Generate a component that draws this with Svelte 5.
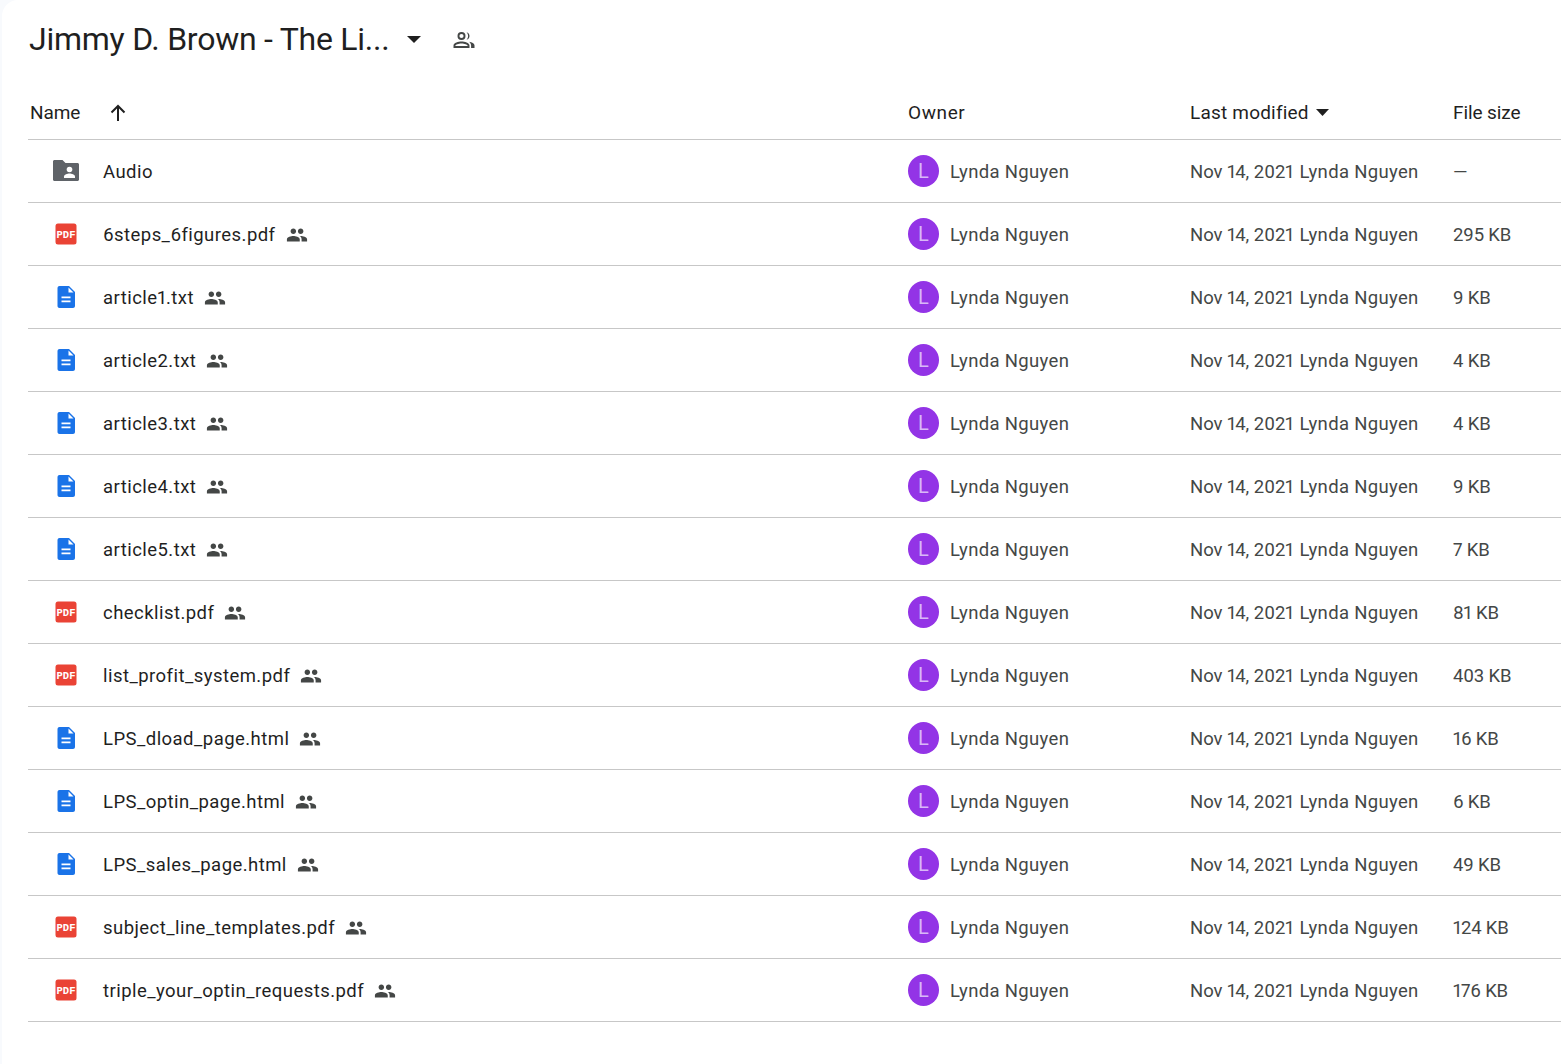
<script>
  const files = [
    { name: 'Audio', type: 'folder', size: '—' },
    { name: '6steps_6figures.pdf', type: 'pdf', size: '295 KB', shared: true },
    { name: 'article1.txt', type: 'doc', size: '9 KB', shared: true },
    { name: 'article2.txt', type: 'doc', size: '4 KB', shared: true },
    { name: 'article3.txt', type: 'doc', size: '4 KB', shared: true },
    { name: 'article4.txt', type: 'doc', size: '9 KB', shared: true },
    { name: 'article5.txt', type: 'doc', size: '7 KB', shared: true },
    { name: 'checklist.pdf', type: 'pdf', size: '81 KB', shared: true },
    { name: 'list_profit_system.pdf', type: 'pdf', size: '403 KB', shared: true },
    { name: 'LPS_dload_page.html', type: 'doc', size: '16 KB', shared: true },
    { name: 'LPS_optin_page.html', type: 'doc', size: '6 KB', shared: true },
    { name: 'LPS_sales_page.html', type: 'doc', size: '49 KB', shared: true },
    { name: 'subject_line_templates.pdf', type: 'pdf', size: '124 KB', shared: true },
    { name: 'triple_your_optin_requests.pdf', type: 'pdf', size: '176 KB', shared: true }
  ]
</script>

<style>
  :global(body) {
    background: #f8fafd;
    font-family: Roboto, "Liberation Sans", sans-serif;
  }
  .page {
    margin-left: 2px;
    height: 1064px;
    background: #fff;
    border-radius: 16px 0 0 0;
    padding-left: 26px;
    overflow: hidden;
  }
  .title-bar {
    height: 78px;
    display: flex;
    align-items: center;
    padding-left: 1px;
  }
  .title {
    font-size: 32px;
    letter-spacing: -0.25px;
    color: #1f1f1f;
    width: 361px;
    white-space: nowrap;
  }
  .caret {
    margin-left: 17px;
    display: block;
  }
  .people-outline {
    margin-left: 31px;
    margin-top: 2px;
    display: block;
  }
  .row {
    display: grid;
    grid-template-columns: 880px 282px 263px 1fr;
    align-items: center;
    height: 62px;
    border-bottom: 1px solid #c7c7c7;
    font-size: 18.5px;
    font-variant-numeric: proportional-nums;
    color: #444746;
  }
  .t {
    padding-top: 2px;
  }
  .head {
    padding-top: 8px;
    height: 53px;
    color: #1f1f1f;
    font-size: 19px;
  }
  .sort {
    display: flex;
    align-items: center;
    gap: 26px;
    padding-left: 2px;
    letter-spacing: -0.1px;
  }
  .head-owner {
    letter-spacing: 0.6px;
  }
  .modified {
    display: flex;
    align-items: center;
    gap: 7px;
    letter-spacing: 0.2px;
  }
  .head-size {
    letter-spacing: -0.1px;
  }
  .name-cell {
    display: flex;
    align-items: center;
    padding-left: 25px;
    color: #1f1f1f;
    letter-spacing: 0.45px;
  }
  .icon {
    width: 26px;
    height: 26px;
    margin-right: 24px;
    flex: none;
    display: block;
    overflow: visible;
  }
  .pdf {
    font-family: "Liberation Mono", monospace;
    font-size: 10.5px;
    font-weight: 700;
    letter-spacing: 0;
    fill: #fff;
  }
  .shared {
    margin-left: 10px;
    padding-top: 2px;
    display: block;
  }
  .owner {
    display: flex;
    align-items: center;
    gap: 11px;
    letter-spacing: 0.33px;
  }
  .avatar {
    width: 31px;
    height: 32px;
    border-radius: 50%;
    background: #9334e6;
    color: #d9b8f7;
    display: flex;
    align-items: center;
    justify-content: center;
    font-size: 20px;
    letter-spacing: 0;
  }
  .when {
    display: flex;
    gap: 6px;
    white-space: nowrap;
  }
  .by {
    letter-spacing: 0.33px;
  }
  .size {
    letter-spacing: -0.15px;
  }
</style>

<div class="page">
  <div class="title-bar">
    <div class="title">Jimmy D. Brown - The Li...</div>
    <svg class="caret" width="14" height="7" viewBox="0 0 14 7"><path d="M0 0h14L7 7z" fill="#1f1f1f" /></svg>
    <svg class="people-outline" width="24" height="24" viewBox="0 0 24 24" fill="#444746">
      <path d="M9.5 4a4 4 0 1 1 0 8 4 4 0 0 1 0-8zm0 1.900a2.100 2.100 0 1 0 0 4.200 2.100 2.100 0 0 0 0-4.200z" />
      <path d="M14.500 4.200c1.800.4 3 2 3 3.800s-1.200 3.400-3 3.800c1-1 1.600-2.400 1.600-3.800s-.6-2.800-1.600-3.800z" />
      <path d="M9.500 13.500c3 0 8 1.300 8 4V20H1.500v-2.500c0-2.700 5-4 8-4zm0 1.900c-2.900 0-6.100 1.200-6.100 2.100v.6h12.200v-.6c0-.9-3.200-2.100-6.100-2.100z" />
      <path d="M17 13.800c2.700.5 5.500 1.600 5.500 3.700V20h-3.400v-2.500c0-1.500-.8-2.700-2.100-3.700z" />
    </svg>
  </div>

  <div class="row head">
    <div class="sort">
      <span>Name</span>
      <svg width="24" height="24" viewBox="0 0 24 24"><path d="M12 20V5.500M5.500 11.500 12 5l6.500 6.500" fill="none" stroke="#1f1f1f" stroke-width="2" /></svg>
    </div>
    <div class="head-owner">Owner</div>
    <div class="modified">
      <span>Last modified</span>
      <svg width="13" height="7" viewBox="0 0 13 7"><path d="M0 0h13L6.500 7z" fill="#1f1f1f" /></svg>
    </div>
    <div class="head-size">File size</div>
  </div>

  {#each files as file}
    <div class="row">
      <div class="name-cell">
        {#if file.type === 'folder'}
          <svg class="icon" viewBox="0 0 26 26">
            <path d="M1.500 2h8l3 3h12c.8 0 1.500.7 1.500 1.500V21.500c0 .8-.7 1.500-1.500 1.500h-23C.7 23 0 22.300 0 21.500V3.500C0 2.700.7 2 1.500 2z" fill="#5f6368" />
            <circle cx="16.500" cy="11.500" r="2.800" fill="#fff" />
            <path d="M11 20v-1.500c0-2 3.500-3 5.500-3s5.500 1 5.500 3V20z" fill="#fff" />
          </svg>
        {:else if file.type === 'pdf'}
          <svg class="icon" viewBox="0 0 26 26">
            <rect x="2.500" y="2.500" width="21" height="21" rx="2.500" fill="#ea4335" />
            <text class="pdf" x="13" y="16.500" text-anchor="middle">PDF</text>
          </svg>
        {:else}
          <svg class="icon" viewBox="0 0 26 26">
            <path d="M6.500 2h9.500l6 6v14c0 1.100-.9 2-2 2H6.500c-1.100 0-2-.9-2-2V4c0-1.100.9-2 2-2z" fill="#1a73e8" />
            <path d="M15.500 3.500 20.500 8.500h-5z" fill="#fff" />
            <path d="M8.500 12.500h9v1.700h-9zM8.500 16.500h9v1.700h-9z" fill="#fff" />
          </svg>
        {/if}
        <span class="t">{file.name}</span>
        {#if file.shared}
          <svg class="shared" width="22" height="24" viewBox="0 0 24 24" fill="#444746">
            <path d="M16 11c1.700 0 3-1.300 3-3s-1.300-3-3-3-3 1.300-3 3 1.300 3 3 3zm-8 0c1.700 0 3-1.300 3-3S9.700 5 8 5 5 6.300 5 8s1.300 3 3 3zm0 2c-2.300 0-7 1.200-7 3.500V19h14v-2.500C15 14.200 10.300 13 8 13zm8 0c-.3 0-.6 0-1 .1 1.200.8 2 1.900 2 3.400V19h6v-2.500c0-2.300-4.700-3.500-7-3.500z" />
          </svg>
        {/if}
      </div>
      <div class="owner">
        <div class="avatar">L</div>
        <span class="t">Lynda Nguyen</span>
      </div>
      <div class="when t"><span>Nov 14, 2021</span><span class="by">Lynda Nguyen</span></div>
      <div class="t size">{file.size}</div>
    </div>
  {/each}
</div>
